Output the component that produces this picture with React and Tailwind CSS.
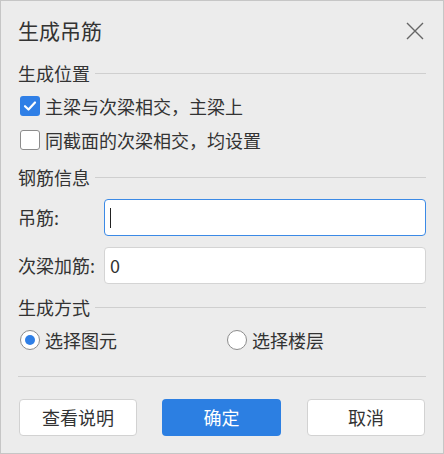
const font = { fontFamily: '"Noto Sans CJK SC", "Noto Sans", sans-serif' };

const Section = ({ title, className = "" }) => (
  <div className={`flex items-center h-[26px] ${className}`}>
    <span className="text-[18px] leading-none text-[#333]">{title}</span>
    <div className="flex-1 h-px bg-[#cfcfcf] ml-[5px]" />
  </div>
);

const Checkbox = ({ checked, label }) => (
  <div className="flex items-center h-[34px]">
    <div
      className={`w-[20px] h-[20px] ml-[2px] rounded-[3px] flex items-center justify-center ${
        checked ? "bg-[#2f7fe6]" : "bg-white border border-[#8c8c8c]"
      }`}
    >
      {checked && (
        <svg width="14" height="14" viewBox="0 0 14 14">
          <path d="M2 7.2 L5.5 10.5 L12 3.5" fill="none" stroke="white" strokeWidth="2.2" strokeLinecap="round" strokeLinejoin="round" />
        </svg>
      )}
    </div>
    <span className="ml-[5px] text-[18px] leading-none text-[#333]">{label}</span>
  </div>
);

const Radio = ({ checked, label }) => (
  <div className="flex items-center">
    <div className="w-[20px] h-[20px] rounded-full bg-white border border-[#8c8c8c] flex items-center justify-center">
      {checked && <div className="w-[10px] h-[10px] rounded-full bg-[#2f7fe6]" />}
    </div>
    <span className="ml-[5px] text-[18px] leading-none text-[#333]">{label}</span>
  </div>
);

const Button = ({ primary, className = "", children }) => (
  <button
    className={`h-[37px] rounded-[4px] text-[18px] ${className} ${
      primary ? "bg-[#2c7fe2] text-white" : "bg-white border border-[#d2d2d2] text-[#333]"
    }`}
  >
    {children}
  </button>
);

export default function App() {
  return (
    <div
      className="w-[444px] h-[454px] border border-[#c6c6c6] bg-[#ececec] px-[17px] flex flex-col"
      style={font}
    >
      <div className="h-[59px] flex items-center justify-between">
        <span className="text-[21px] leading-none text-[#333]">生成吊筋</span>
        <svg width="18" height="18" viewBox="0 0 18 18" className="mr-[2px]">
          <path d="M1 1 L17 17 M17 1 L1 17" stroke="#666" strokeWidth="1.4" />
        </svg>
      </div>

      <Section title="生成位置" />
      <div className="mt-[3px]">
        <Checkbox checked label="主梁与次梁相交，主梁上" />
        <Checkbox label="同截面的次梁相交，均设置" />
      </div>

      <Section title="钢筋信息" className="mt-[7px]" />
      <div className="flex items-center mt-[9px]">
        <span className="w-[86px] text-[18px] text-[#333]">吊筋:</span>
        <div className="flex-1 h-[37px] bg-white border-[1.5px] border-[#3b8ae6] rounded-[4px] flex items-center pl-[5px]">
          <div className="w-px h-[20px] bg-[#222]" />
        </div>
      </div>
      <div className="flex items-center mt-[11px]">
        <span className="w-[86px] text-[18px] text-[#333]">次梁加筋:</span>
        <div className="flex-1 h-[37px] bg-white border border-[#d4d4d4] rounded-[4px] flex items-center pl-[5px]">
          <span className="text-[18px] text-[#333]">0</span>
        </div>
      </div>

      <Section title="生成方式" className="mt-[10px]" />
      <div className="mt-[3px] h-[34px] flex items-center">
        <div className="w-[209px] pl-[2px]">
          <Radio checked label="选择图元" />
        </div>
        <Radio label="选择楼层" />
      </div>

      <div className="mt-[19px] h-px bg-[#cfcfcf]" />

      <div className="mt-[22px] flex pl-px">
        <Button className="w-[118px]">查看说明</Button>
        <Button primary className="w-[119px] ml-[25px]">确定</Button>
        <Button className="w-[118px] ml-[26px]">取消</Button>
      </div>
    </div>
  );
}
